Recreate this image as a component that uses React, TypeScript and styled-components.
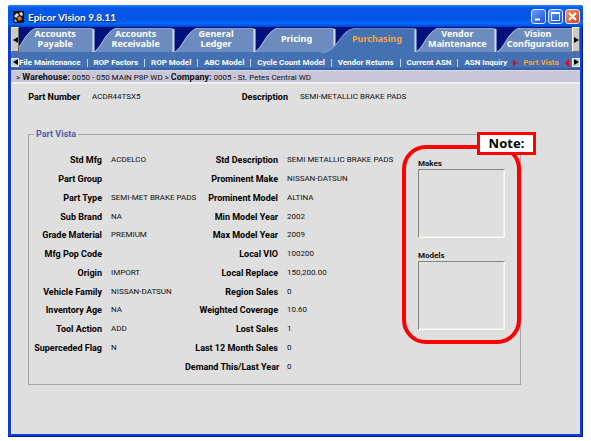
import React from 'react';
import styled, { createGlobalStyle } from 'styled-components';

const GlobalStyle = createGlobalStyle`
  *, *::before, *::after { box-sizing: border-box; }
  body { margin: 0; background: #fff; }
  button, select { font: inherit; margin: 0; }
`;

const Page = styled.div`
  display: flex;
  min-height: 100vh;
  padding: 5px 8px 4px;
  font-family: Roboto, sans-serif;
  font-size: 8px;
  line-height: 10px;
  color: #111;
`;

const Window = styled.main`
  flex: 1;
  display: flex;
  flex-direction: column;
  min-width: 0;
  background: #0a3fdc;
  border-radius: 3px 3px 0 0;
  padding: 0 3px 3px;
  box-shadow: inset -1px -1px #001c8c, inset 1px 0 #1436c4;
`;

const TitleBar = styled.header`
  display: flex;
  align-items: center;
  gap: 4px;
  height: 22px;
  margin: 0 -3px;
  padding: 1px 3px 0 5px;
  border-radius: 3px 3px 0 0;
  background: linear-gradient(#2a80f4, #0458ea 15%, #0455e4 60%, #0468fc 85%, #0440c8);
`;

const Title = styled.h1`
  flex: 1;
  margin: 0;
  font: bold 10px/14px Lato, sans-serif;
  color: #fff;
  text-shadow: 1px 1px #0a2a80;
`;

const WindowButtons = styled.div`
  display: flex;
  gap: 2px;
`;

const WindowButton = styled.button<{ $danger?: boolean }>`
  display: block;
  width: 15px;
  height: 15px;
  padding: 0;
  border: 1px solid #dce8ff;
  border-radius: 3px;
  background: ${(p) => (p.$danger ? 'linear-gradient(135deg, #f0906c, #d84418)' : 'linear-gradient(135deg, #6c9cf8, #1c50d8)')};
  svg { display: block; }
`;

const TabBar = styled.nav`
  display: flex;
  height: 27px;
  background: linear-gradient(#00107c 25px, #4470b4 25px);
`;

const TabList = styled.div`
  flex: 1;
  display: grid;
  grid-template-columns: repeat(7, 1fr);
  margin: 0 -6px 0 -4px;
`;

const Tab = styled.a<{ $active?: boolean }>`
  position: relative;
  z-index: ${(p) => (p.$active ? 1 : 0)};
  display: flex;
  align-items: center;
  justify-content: center;
  text-align: center;
  padding: 0 0 3px;
  font: bold 9px/10px "Noto Sans", sans-serif;
  color: ${(p) => (p.$active ? '#f4a440' : '#fff')};
  text-decoration: none;
  white-space: pre-line;
`;

const TabShape = styled.svg`
  position: absolute;
  inset: 1px 0 0 -16px;
  width: calc(100% + 16px);
  height: 26px;
`;

const TabText = styled.span`
  position: relative;
`;

const TabScroll = styled.button`
  position: relative;
  z-index: 2;
  display: grid;
  place-items: center;
  flex: none;
  width: 8px;
  height: 25px;
  padding: 0;
  border: 1px solid;
  border-color: #f4f2ea #6c6c6c #6c6c6c #f4f2ea;
  background: #cfcac0;
`;

const SubBar = styled.nav`
  display: flex;
  align-items: center;
  height: 16px;
  background: linear-gradient(#4470b4, #4470b4 80%, #305a9c);
`;

const SubLinks = styled.div`
  flex: 1;
  display: flex;
  align-items: center;
  justify-content: space-between;
  min-width: 0;
  padding: 2px 3px 0 0;
  white-space: nowrap;
`;

const SubLink = styled.a<{ $active?: boolean }>`
  font-weight: bold;
  color: ${(p) => (p.$active ? '#f4a440' : '#fff')};
  text-decoration: none;
`;

const Separator = styled.span`
  width: 1px;
  height: 8px;
  background: #c4d4ec;
`;

const Marker = styled.svg`
  display: block;
  width: 4px;
  height: 8px;
`;

const SubScroll = styled.button`
  display: grid;
  place-items: center;
  flex: none;
  width: 8px;
  height: 9px;
  padding: 0;
  border: 1px solid #f0f0f0;
  background: #c8ccd4;
`;

const Breadcrumb = styled.div`
  height: 14px;
  padding: 1px 5px;
  background: #c8c6d8;
  border-top: 1px solid #dedcea;
  border-bottom: 2px solid #f0f0f0;
  line-height: 10px;
  white-space: nowrap;
  b { font-size: 9px; }
`;

const Content = styled.section`
  flex: 1;
  padding: 8px 59px 8px 16px;
  background: #dfdfdf;
  border-left: 1px solid #f4f4f4;
`;

const Summary = styled.dl`
  display: grid;
  grid-template-columns: 52px 130px 54px 1fr;
  align-items: center;
  column-gap: 12px;
  margin: 0;
`;

const Label = styled.dt`
  font-size: 9px;
  font-weight: bold;
  text-align: right;
  white-space: nowrap;
  color: #000;
`;

const Value = styled.dd`
  margin: 0;
  white-space: nowrap;
`;

const VistaGroup = styled.fieldset`
  display: grid;
  grid-template-columns: 156px 1fr 102px;
  min-width: 0;
  margin: 27px 0 0;
  padding: 12px 0 8px;
  border: 1px solid #a4a4a4;
`;

const Legend = styled.legend`
  margin-left: 5px;
  padding: 0 2px;
  font-size: 9px;
  font-weight: bold;
  color: #5460a8;
`;

const Details = styled.dl<{ $labels: number }>`
  display: grid;
  grid-template-columns: ${(p) => p.$labels}px 1fr;
  grid-template-rows: repeat(12, 1fr);
  align-items: center;
  column-gap: 9px;
  min-height: 225px;
  margin: 0;
`;

const Lists = styled.div`
  position: relative;
  align-self: start;
  display: flex;
  flex-direction: column;
  gap: 13px;
  padding: 8px 15px 0 0;
`;

const ListField = styled.label`
  display: flex;
  flex-direction: column;
  font-weight: bold;
`;

const ListBox = styled.select`
  appearance: none;
  width: 100%;
  height: 69px;
  border: 1px solid;
  border-color: #84887c #f8f8f4 #f8f8f4 #84887c;
  box-shadow: inset -1px -1px #eeeee8;
  border-radius: 0;
  background: #dfdfdf;
  overflow: hidden;
`;

const Highlight = styled.div`
  position: absolute;
  inset: -6px -1px -14px -16px;
  border: 4px solid #f00;
  border-radius: 24px;
  pointer-events: none;
`;

const NoteTag = styled.div`
  position: absolute;
  top: -19px;
  right: -16px;
  width: 59px;
  border: 3px solid #f00;
  background: #fff;
  text-align: center;
  font: bold 13px/17px "Noto Sans", sans-serif;
  color: #000;
`;

const tabs = [
  'Accounts\nPayable',
  'Accounts\nReceivable',
  'General\nLedger',
  'Pricing',
  'Purchasing',
  'Vendor\nMaintenance',
  'Vision\nConfiguration',
];

const links = [
  'File Maintenance',
  'ROP Factors',
  'ROP Model',
  'ABC Model',
  'Cycle Count Model',
  'Vendor Returns',
  'Current ASN',
  'ASN Inquiry',
];

const partFields = [
  ['Std Mfg', 'ACDELCO'],
  ['Part Group', ''],
  ['Part Type', 'SEMI-MET BRAKE PADS'],
  ['Sub Brand', 'NA'],
  ['Grade Material', 'PREMIUM'],
  ['Mfg Pop Code', ''],
  ['Origin', 'IMPORT'],
  ['Vehicle Family', 'NISSAN-DATSUN'],
  ['Inventory Age', 'NA'],
  ['Tool Action', 'ADD'],
  ['Superceded Flag', 'N'],
];

const demandFields = [
  ['Std Description', 'SEMI METALLIC BRAKE PADS'],
  ['Prominent Make', 'NISSAN-DATSUN'],
  ['Prominent Model', 'ALTINA'],
  ['Min Model Year', '2002'],
  ['Max Model Year', '2009'],
  ['Local VIO', '100200'],
  ['Local Replace', '150,200.00'],
  ['Region Sales', '0'],
  ['Weighted Coverage', '10.60'],
  ['Lost Sales', '1'],
  ['Last 12 Month Sales', '0'],
  ['Demand This/Last Year', '0'],
];

function Triangle({ left }: { left?: boolean }) {
  return (
    <svg width="5" height="6" viewBox="0 0 5 6" aria-hidden="true">
      <path d={left ? 'M5 0V6L0 3Z' : 'M0 0V6L5 3Z'} fill="#000" />
    </svg>
  );
}

function AppIcon() {
  return (
    <svg width="11" height="12" viewBox="0 0 11 12" aria-hidden="true">
      <rect width="11" height="12" fill="#181414" />
      <path d="M1 5L4 2L6 4L3 7ZM6 2L9 1L10 4L8 5Z" fill="#e8dcc8" />
      <path d="M4 7L7 5L9 8L6 10Z" fill="#d87830" />
      <path d="M1 9L3 8L4 11H2Z" fill="#b8a890" />
    </svg>
  );
}

function TabItem({ text, active }: { text: string; active?: boolean }) {
  return (
    <Tab href="#" $active={active} aria-current={active ? 'page' : undefined}>
      <TabShape viewBox="0 0 96 26" preserveAspectRatio="none" aria-hidden="true">
        {active ? (
          <>
            <path d="M0 25C10 24 14 18 20 10C26 2 30 0 40 0H93Q95 0 95 3V26H0Z" fill="#4470b4" />
            <path d="M0 25C10 24 14 18 20 10C26 2 30 0 40 0H93" fill="none" stroke="#7c98c8" />
            <path d="M94 1V24" stroke="#c4d0e4" strokeWidth="2" />
          </>
        ) : (
          <>
            <path d="M15 24C22 20 23 12 29 6C33 1 36 0 42 0H92Q95 0 95 3V24Z" fill="#6c8cc0" />
            <path d="M15 24C22 20 23 12 29 6C33 1 36 0 42 0H92" fill="none" stroke="#a8b8d4" />
            <path d="M94 1V24" stroke="#d0d8e4" strokeWidth="2" />
          </>
        )}
      </TabShape>
      <TabText>{text}</TabText>
    </Tab>
  );
}

function Rows({ fields }: { fields: string[][] }) {
  return (
    <>
      {fields.map(([name, value]) => (
        <React.Fragment key={name}>
          <Label>{name}</Label>
          <Value>{value}</Value>
        </React.Fragment>
      ))}
    </>
  );
}

export default function App() {
  return (
    <Page>
      <GlobalStyle />
      <Window>
        <TitleBar>
          <AppIcon />
          <Title>Epicor Vision 9.8.11</Title>
          <WindowButtons>
            <WindowButton aria-label="Minimize">
              <svg width="13" height="13" viewBox="0 0 13 13"><path d="M3 9.5H8" stroke="#fff" strokeWidth="2" /></svg>
            </WindowButton>
            <WindowButton aria-label="Maximize">
              <svg width="13" height="13" viewBox="0 0 13 13"><path d="M2.5 3V10.5H10.5V3M2 3H11" fill="none" stroke="#fff" strokeWidth="1" /><path d="M2 3H11" stroke="#fff" strokeWidth="2" /></svg>
            </WindowButton>
            <WindowButton $danger aria-label="Close">
              <svg width="13" height="13" viewBox="0 0 13 13"><path d="M3 3L10 10M10 3L3 10" stroke="#fff" strokeWidth="2" /></svg>
            </WindowButton>
          </WindowButtons>
        </TitleBar>
        <TabBar aria-label="Modules">
          <TabScroll aria-label="Previous modules"><Triangle left /></TabScroll>
          <TabList>
            {tabs.map((text) => (
              <TabItem key={text} text={text} active={text === 'Purchasing'} />
            ))}
          </TabList>
          <TabScroll aria-label="More modules"><Triangle /></TabScroll>
        </TabBar>
        <SubBar aria-label="Purchasing pages">
          <SubScroll aria-label="Previous pages"><Triangle left /></SubScroll>
          <SubLinks>
            {links.map((text, i) => (
              <React.Fragment key={text}>
                <SubLink href="#">{text}</SubLink>
                {i < links.length - 1 && <Separator />}
              </React.Fragment>
            ))}
            <Marker viewBox="0 0 4 8" aria-hidden="true"><path d="M0 0L4 4L0 8Z" fill="#f00000" /></Marker>
            <SubLink href="#" $active aria-current="page">Part Vista</SubLink>
            <Marker viewBox="0 0 4 8" aria-hidden="true"><path d="M4 0L0 4L4 8Z" fill="#f00000" /></Marker>
          </SubLinks>
          <SubScroll aria-label="More pages"><Triangle /></SubScroll>
        </SubBar>
        <Breadcrumb>
          &gt; <b>Warehouse:</b> 0050 - 050 MAIN P8P WD &gt; <b>Company:</b> 0005 - St. Petes Central WD
        </Breadcrumb>
        <Content>
          <Summary>
            <Label>Part Number</Label>
            <Value>ACDR44TSX5</Value>
            <Label>Description</Label>
            <Value>SEMI-METALLIC BRAKE PADS</Value>
          </Summary>
          <VistaGroup>
            <Legend>Part Vista</Legend>
            <Details $labels={73}><Rows fields={partFields} /></Details>
            <Details $labels={93}><Rows fields={demandFields} /></Details>
            <Lists>
              <Highlight />
              <ListField>Makes<ListBox size={6} /></ListField>
              <ListField>Models<ListBox size={6} /></ListField>
              <NoteTag>Note:</NoteTag>
            </Lists>
          </VistaGroup>
        </Content>
      </Window>
    </Page>
  );
}
